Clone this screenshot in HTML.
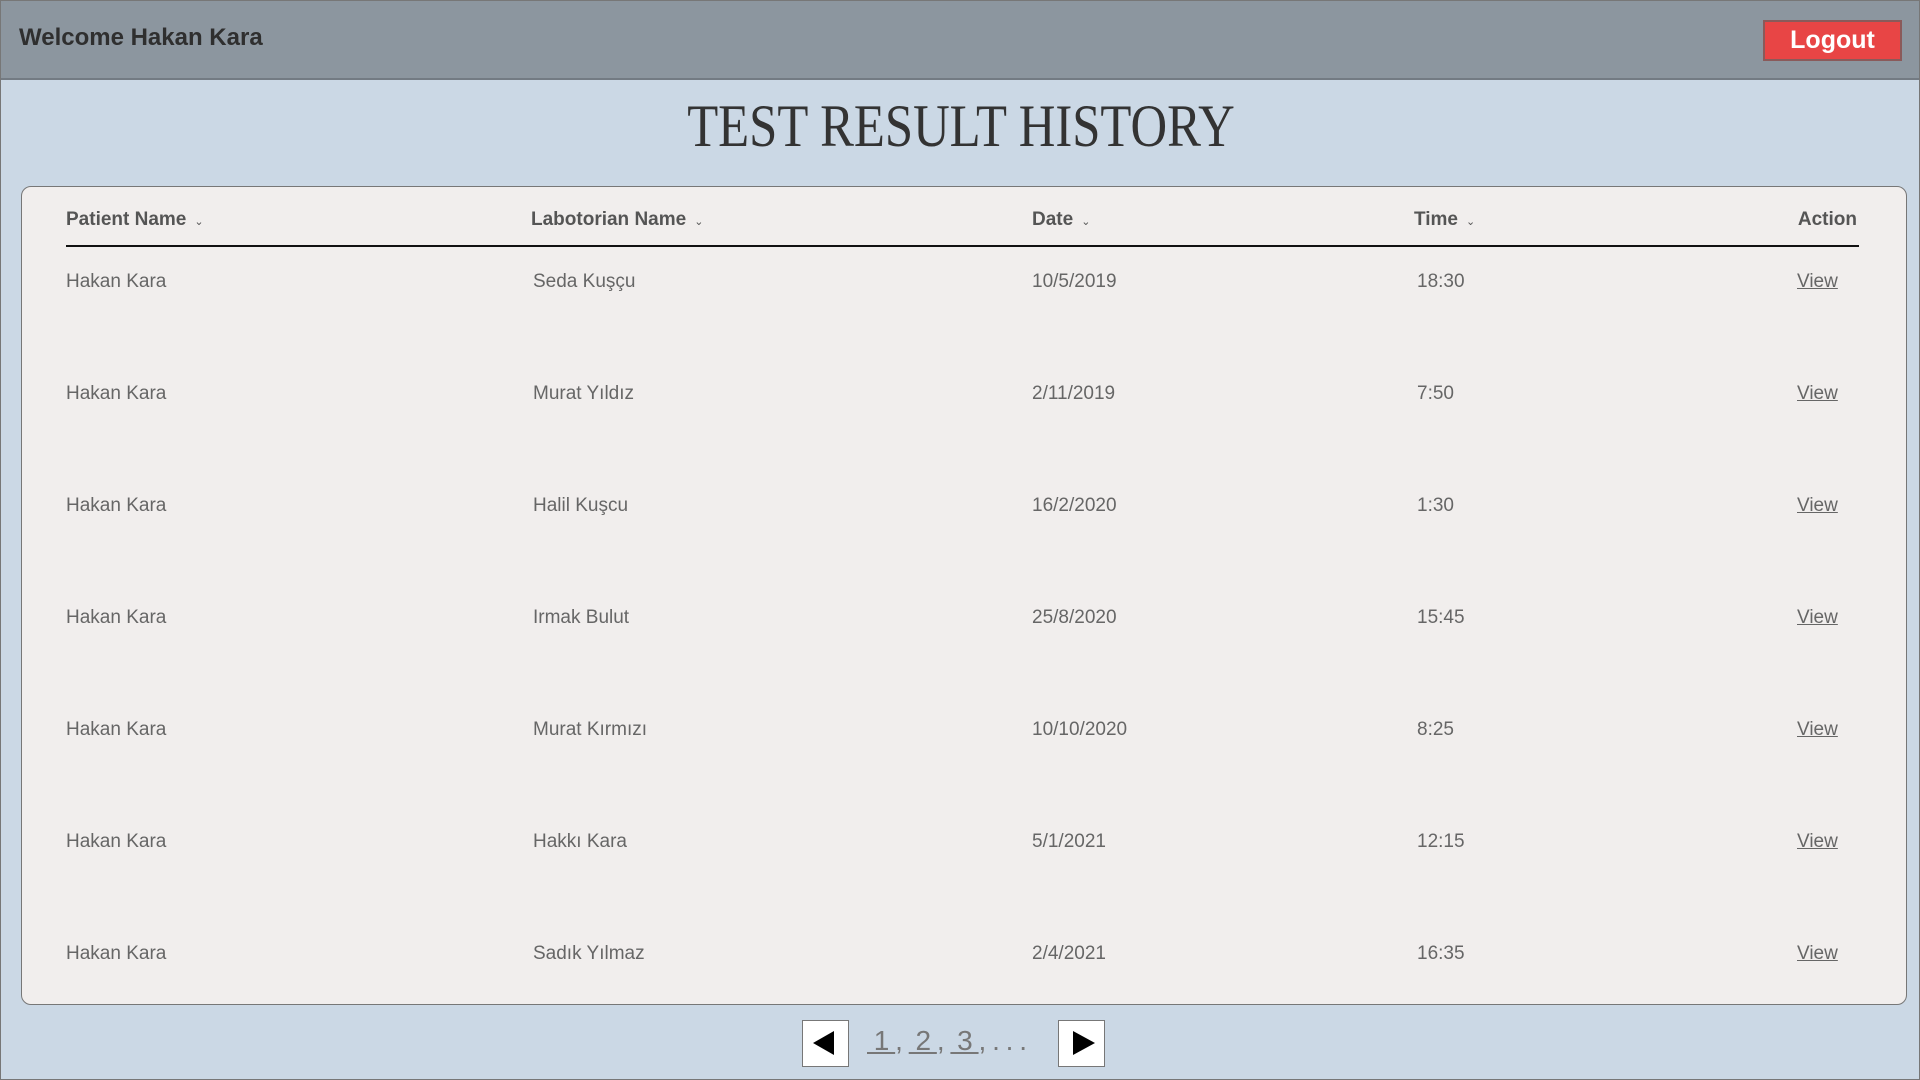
<!DOCTYPE html>
<html><head><meta charset="utf-8"><style>
*{margin:0;padding:0;box-sizing:border-box}
body{width:1920px;height:1080px;background:#cbd8e5;font-family:"Liberation Sans",sans-serif;position:relative;overflow:hidden;border:1px solid #777}
.hdr{position:absolute;left:0;top:0;width:1918px;height:79px;background:#8c969f;border-bottom:2px solid #737b83}
.wel{position:absolute;left:18px;top:23px;font-size:24px;font-weight:bold;color:#2f2f2f}
.lo{position:absolute;left:1762px;top:19px;width:139px;height:41px;background:#e84545;border:2px solid #8a5a5a;color:#fff;font-weight:bold;font-size:25px;text-align:center;line-height:37px}
.title{position:absolute;left:0;width:1920px;top:91px;text-align:center;font-family:"Liberation Serif",serif;font-size:60px;color:#333}
.title span{display:inline-block;transform:scaleX(0.845)}
.card{position:absolute;left:20px;top:185px;width:1886px;height:819px;background:#f1eeed;border:1px solid #777;border-radius:10px}
.t{position:absolute;font-size:19px;color:#666;white-space:nowrap;margin-top:1px}
.h{font-weight:bold;color:#555}
.h small{font-size:11px;margin-left:8px;font-weight:normal}
.line{position:absolute;left:65px;top:244px;width:1793px;height:2px;background:#111}
.v{text-decoration:underline}
.pb{position:absolute;top:1019px;width:47px;height:47px;background:#fff;border:1px solid #777}
.pg{position:absolute;left:866px;top:1024px;font-size:28px;color:#777;letter-spacing:-1px}
.pg u{text-decoration:underline}
</style></head><body>
<div class="hdr"><div class="wel">Welcome Hakan Kara</div><div class="lo">Logout</div></div>
<div class="title"><span>TEST RESULT HISTORY</span></div>
<div class="card"></div>
<div class="t h" style="left:65px;top:207px">Patient Name<small>⌄</small></div>
<div class="t h" style="left:530px;top:207px">Labotorian Name<small>⌄</small></div>
<div class="t h" style="left:1031px;top:207px">Date<small>⌄</small></div>
<div class="t h" style="left:1413px;top:207px">Time<small>⌄</small></div>
<div class="t h" style="right:62px;top:207px">Action</div>
<div class="line"></div>

<div class="t" style="left:65px;top:269px">Hakan Kara</div><div class="t" style="left:532px;top:269px">Seda Kuşçu</div><div class="t" style="left:1031px;top:269px">10/5/2019</div><div class="t" style="left:1416px;top:269px">18:30</div><div class="t v" style="left:1796px;top:269px">View</div>
<div class="t" style="left:65px;top:381px">Hakan Kara</div><div class="t" style="left:532px;top:381px">Murat Yıldız</div><div class="t" style="left:1031px;top:381px">2/11/2019</div><div class="t" style="left:1416px;top:381px">7:50</div><div class="t v" style="left:1796px;top:381px">View</div>
<div class="t" style="left:65px;top:493px">Hakan Kara</div><div class="t" style="left:532px;top:493px">Halil Kuşcu</div><div class="t" style="left:1031px;top:493px">16/2/2020</div><div class="t" style="left:1416px;top:493px">1:30</div><div class="t v" style="left:1796px;top:493px">View</div>
<div class="t" style="left:65px;top:605px">Hakan Kara</div><div class="t" style="left:532px;top:605px">Irmak Bulut</div><div class="t" style="left:1031px;top:605px">25/8/2020</div><div class="t" style="left:1416px;top:605px">15:45</div><div class="t v" style="left:1796px;top:605px">View</div>
<div class="t" style="left:65px;top:717px">Hakan Kara</div><div class="t" style="left:532px;top:717px">Murat Kırmızı</div><div class="t" style="left:1031px;top:717px">10/10/2020</div><div class="t" style="left:1416px;top:717px">8:25</div><div class="t v" style="left:1796px;top:717px">View</div>
<div class="t" style="left:65px;top:829px">Hakan Kara</div><div class="t" style="left:532px;top:829px">Hakkı Kara</div><div class="t" style="left:1031px;top:829px">5/1/2021</div><div class="t" style="left:1416px;top:829px">12:15</div><div class="t v" style="left:1796px;top:829px">View</div>
<div class="t" style="left:65px;top:941px">Hakan Kara</div><div class="t" style="left:532px;top:941px">Sadık Yılmaz</div><div class="t" style="left:1031px;top:941px">2/4/2021</div><div class="t" style="left:1416px;top:941px">16:35</div><div class="t v" style="left:1796px;top:941px">View</div>

<div class="pb" style="left:801px"><svg width="45" height="45"><polygon points="10,22 31,10 31,34" fill="#000"/></svg></div>
<div class="pg"><u>&nbsp;1&nbsp;</u>, <u>&nbsp;2&nbsp;</u>, <u>&nbsp;3&nbsp;</u>, . . .</div>
<div class="pb" style="left:1057px"><svg width="45" height="45"><polygon points="14,10 36,22 14,34" fill="#000"/></svg></div>
</body></html>
